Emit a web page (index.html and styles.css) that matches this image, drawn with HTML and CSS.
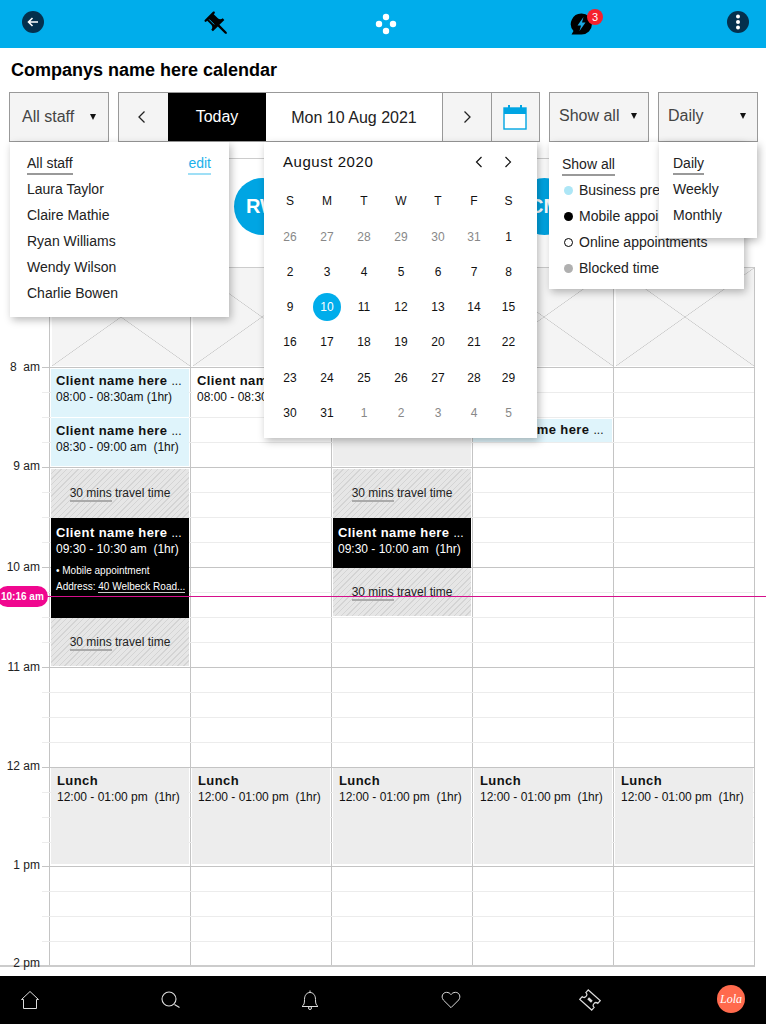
FILE: index.html
```html
<!DOCTYPE html>
<html lang="en">
<head>
<meta charset="utf-8">
<title>Calendar</title>
<link rel="stylesheet" href="styles.css">
</head>
<body>
<div class="app">
  <header class="topbar">
    <button class="round-btn" aria-label="Back"><svg width="14" height="14" viewBox="0 0 14 14"><path d="M12 7H2.500M6.500 3L2.500 7l4 4" fill="none" stroke="#fff" stroke-width="1.600"/></svg></button>
    <svg class="pin" width="30" height="30" viewBox="0 0 26 26"><g transform="rotate(-45 13 13)"><path d="M17 10V5h1c.55 0 1-.45 1-1s-.45-1-1-1H8c-.55 0-1 .45-1 1s.45 1 1 1h1v5c0 1.660-1.340 3-3 3v2h6v9l1 1 1-1v-9h6v-2c-1.660 0-3-1.340-3-3z" fill="#000"/><path d="M11 5.500v6" stroke="#00adeb" stroke-width=".8"/></g></svg>
    <svg class="dots" width="22" height="22" viewBox="0 0 22 22"><circle cx="11" cy="4" r="3.200" fill="#fff"/><circle cx="4" cy="11" r="3.200" fill="#fff"/><circle cx="18" cy="11" r="3.200" fill="#fff"/><circle cx="11" cy="18" r="3.200" fill="#fff"/></svg>
    <div class="bolt">
      <svg width="24" height="24" viewBox="0 0 24 24"><path d="M12.500 1.500a10.500 10.500 0 0 1 0 21H2.500l2-3.500A10.500 10.500 0 0 1 12.500 1.500z" fill="#000"/><path d="M14.500 5l-6 8.500h3.500L10.500 19l6-8.500H13z" fill="#1ba8e0"/></svg>
      <span class="badge">3</span>
    </div>
    <button class="round-btn more" aria-label="More"><svg width="6" height="16" viewBox="0 0 6 16"><circle cx="3" cy="2.500" r="2" fill="#fff"/><circle cx="3" cy="8" r="2" fill="#fff"/><circle cx="3" cy="13.500" r="2" fill="#fff"/></svg></button>
  </header>

  <h1 class="page-title">Companys name here calendar</h1>

  <div class="toolbar">
    <div class="select"><span>All staff</span><i class="caret"></i></div>
    <div class="datebar">
      <div class="nav-cell"><svg width="10" height="14" viewBox="0 0 10 14"><path d="M7.500 1.500L2 7l5.500 5.500" fill="none" stroke="#222" stroke-width="1.300"/></svg></div>
      <div class="today">Today</div>
      <div class="date">Mon 10 Aug 2021</div>
      <div class="nav-cell"><svg width="10" height="14" viewBox="0 0 10 14"><path d="M2.500 1.500L8 7l-5.500 5.500" fill="none" stroke="#222" stroke-width="1.300"/></svg></div>
      <div class="nav-cell nav-last"><svg width="24" height="25" viewBox="0 0 24 25"><rect x="1" y="3" width="22" height="21" fill="#fff" stroke="#00a5e3" stroke-width="1.400"/><rect x="1" y="3" width="22" height="6" fill="#00a5e3"/><path d="M6 0v4M18 0v4" stroke="#00a5e3" stroke-width="2"/></svg></div>
    </div>
    <div class="select select-show"><span>Show all</span><i class="caret"></i></div>
    <div class="select select-view"><span>Daily</span><i class="caret"></i></div>
  </div>

  <div class="staff-row">
    <div class="staff-cell"><span class="avatar">LT</span></div>
    <div class="staff-cell"><span class="avatar">RW</span></div>
    <div class="staff-cell"><span class="avatar">WW</span></div>
    <div class="staff-cell"><span class="avatar">CM</span></div>
    <div class="staff-cell"><span class="avatar">CB</span></div>
  </div>

  <main class="schedule">
    <div class="col c1"></div><div class="col c2"></div><div class="col c3"></div><div class="col c4"></div><div class="col c5"></div>

    <div class="ph-line"></div>
    <div class="ph c1"></div><div class="ph c2"></div><div class="ph c3"></div><div class="ph c4"></div><div class="ph c5"></div>

    <div class="hour h8"></div><div class="hour h9"></div><div class="hour h10"></div><div class="hour h11"></div><div class="hour h12"></div><div class="hour h13"></div>

    <div class="time h8">8&nbsp; am</div>
    <div class="time h9">9 am</div>
    <div class="time h10">10 am</div>
    <div class="time h11">11 am</div>
    <div class="time h12">12 am</div>
    <div class="time h13">1 pm</div>
    <div class="time h14">2 pm</div>

    <div class="event client c1 t800"><b>Client name here <i>...</i></b><span>08:00 - 08:30am (1hr)</span></div>
    <div class="event client second c1 t830"><b>Client name here <i>...</i></b><span>08:30 - 09:00 am&nbsp; (1hr)</span></div>
    <div class="event travel c1 t900"><p><u>30 mins</u> travel time</p></div>
    <div class="event dark c1 t930-long"><b>Client name here <i>...</i></b><span>09:30 - 10:30 am&nbsp; (1hr)</span><small>• Mobile appointment</small><small>Address: <u>40 Welbeck Road...</u></small></div>
    <div class="event travel tail c1 t1030"><p><u>30 mins</u> travel time</p></div>

    <div class="event plain c2 t800"><b>Client name here <i>...</i></b><span>08:00 - 08:30am (1hr)</span></div>

    <div class="event blocked c3 t830"></div>
    <div class="event travel c3 t900"><p><u>30 mins</u> travel time</p></div>
    <div class="event dark c3 t930"><b>Client name here <i>...</i></b><span>09:30 - 10:00 am&nbsp; (1hr)</span></div>
    <div class="event travel tail c3 t1000"><p><u>30 mins</u> travel time</p></div>

    <div class="event client short c4 t830s"><b>Client name here <i>...</i></b></div>

    <div class="event lunch c1 t1200"><b>Lunch</b><span>12:00 - 01:00 pm&nbsp; (1hr)</span></div>
    <div class="event lunch c2 t1200"><b>Lunch</b><span>12:00 - 01:00 pm&nbsp; (1hr)</span></div>
    <div class="event lunch c3 t1200"><b>Lunch</b><span>12:00 - 01:00 pm&nbsp; (1hr)</span></div>
    <div class="event lunch c4 t1200"><b>Lunch</b><span>12:00 - 01:00 pm&nbsp; (1hr)</span></div>
    <div class="event lunch c5 t1200"><b>Lunch</b><span>12:00 - 01:00 pm&nbsp; (1hr)</span></div>
  </main>

  <div class="now"><span class="now-pill">10:16 am</span><span class="now-line"></span></div>

  <div class="menu menu-staff">
    <div class="menu-head"><span class="current">All staff</span><span class="edit">edit</span></div>
    <div class="menu-item">Laura Taylor</div>
    <div class="menu-item">Claire Mathie</div>
    <div class="menu-item">Ryan Williams</div>
    <div class="menu-item">Wendy Wilson</div>
    <div class="menu-item">Charlie Bowen</div>
  </div>

  <div class="menu menu-cal">
    <div class="cal-head">
      <span class="cal-title">August 2020</span>
      <svg width="10" height="14" viewBox="0 0 10 14"><path d="M7.500 2L2.500 7l5 5" fill="none" stroke="#111" stroke-width="1.200"/></svg>
      <svg width="10" height="14" viewBox="0 0 10 14"><path d="M2.500 2l5 5-5 5" fill="none" stroke="#111" stroke-width="1.200"/></svg>
    </div>
    <div class="cal-grid">
      <span class="wd">S</span><span class="wd">M</span><span class="wd">T</span><span class="wd">W</span><span class="wd">T</span><span class="wd">F</span><span class="wd">S</span>
      <span class="off">26</span><span class="off">27</span><span class="off">28</span><span class="off">29</span><span class="off">30</span><span class="off">31</span><span>1</span>
      <span>2</span><span>3</span><span>4</span><span>5</span><span>6</span><span>7</span><span>8</span>
      <span>9</span><span class="sel"><em>10</em></span><span>11</span><span>12</span><span>13</span><span>14</span><span>15</span>
      <span>16</span><span>17</span><span>18</span><span>19</span><span>20</span><span>21</span><span>22</span>
      <span>23</span><span>24</span><span>25</span><span>26</span><span>27</span><span>28</span><span>29</span>
      <span>30</span><span>31</span><span class="off">1</span><span class="off">2</span><span class="off">3</span><span class="off">4</span><span class="off">5</span>
    </div>
  </div>

  <div class="menu menu-show">
    <div class="menu-head"><span class="current">Show all</span></div>
    <div class="menu-item legend"><i class="dot d-blue"></i>Business premises</div>
    <div class="menu-item legend"><i class="dot d-black"></i>Mobile appointments</div>
    <div class="menu-item legend"><i class="dot d-ring"></i>Online appointments</div>
    <div class="menu-item legend"><i class="dot d-grey"></i>Blocked time</div>
  </div>

  <div class="menu menu-view">
    <div class="menu-head"><span class="current">Daily</span></div>
    <div class="menu-item">Weekly</div>
    <div class="menu-item">Monthly</div>
  </div>

  <nav class="bottombar">
    <svg width="20" height="20" viewBox="0 0 20 20"><path d="M10 1.500L1.500 9.500h2V18.500h13V9.500h2z" fill="none" stroke="#ddd" stroke-width="1"/></svg>
    <svg width="20" height="20" viewBox="0 0 20 20"><circle cx="9" cy="9" r="7" fill="none" stroke="#ddd" stroke-width="1.100"/><path d="M14.500 14.500l5 3" stroke="#ddd" stroke-width="1.100"/></svg>
    <svg width="20" height="20" viewBox="0 0 20 20"><path d="M2 16.500c2-1.500 2.500-3 2.500-7C4.500 5 7 2.500 10 2.500S15.500 5 15.500 9.500c0 4 .5 5.500 2.500 7z" fill="none" stroke="#ddd" stroke-width="1"/><path d="M10 .5v2" stroke="#ddd"/><circle cx="10" cy="18" r="1.500" fill="none" stroke="#ddd"/></svg>
    <svg class="heart" width="20" height="18" viewBox="0 0 22 20"><path d="M11 18.500L2.500 10C-.5 6 2 1.500 6 1.500c2.500 0 4 1.200 5 2.500 1-1.300 2.500-2.500 5-2.500 4 0 6.500 4.500 3.500 8.500z" fill="none" stroke="#ddd" stroke-width="1.100"/></svg>
    <svg width="22" height="22" viewBox="0 0 22 22"><g transform="rotate(42 11 11)"><path d="M3 4.700h16v3.600a2.700 2.700 0 0 0 0 5.400v3.600H3v-3.600a2.700 2.700 0 0 0 0-5.400z" fill="none" stroke="#ddd" stroke-width="1.200"/><rect x="8.500" y="9.700" width="5" height="2.600" fill="#ddd"/></g></svg>
    <span class="lola">Lola</span>
  </nav>
</div>
</body>
</html>
```

FILE: styles.css
```css
* { box-sizing: border-box; }
html, body { margin: 0; padding: 0; }
body { font-family: "Liberation Sans", Arial, sans-serif; color: #111; background: #fff; }
.app { position: relative; width: 766px; height: 1024px; overflow: hidden; }

/* top bar */
.topbar { height: 48px; background: #00adeb; display: flex; align-items: center; padding: 0 0 4px 22px; }
.round-btn { width: 22px; height: 22px; border: 0; padding: 0; border-radius: 50%; background: #04304d; display: flex; align-items: center; justify-content: center; flex: none; }
.pin { margin-left: 158px; margin-top: 4px; flex: none; }
.dots { margin-top: 4px; margin-left: 143px; flex: none; }
.bolt { position: relative; width: 24px; height: 24px; margin-top: 4px; margin-left: 172px; flex: none; }
.bolt svg { display: block; }
.badge { position: absolute; left: 18px; top: -3px; width: 16px; height: 16px; border-radius: 50%; background: #f5202c; color: #fff; font-size: 11px; line-height: 16px; text-align: center; }
.more { margin-left: 134px; }

.page-title { margin: 0; height: 44px; padding: 13px 0 0 11px; font-size: 18px; line-height: 18px; font-weight: 700; color: #000; }

/* toolbar */
.toolbar { display: flex; padding-left: 9px; height: 50px; }
.select { position: relative; width: 100px; height: 50px; border: 1px solid #999; background: #f4f4f4; display: flex; align-items: center; justify-content: space-between; padding: 0 12px 0 12px; font-size: 16px; color: #444; }
.caret { width: 0; height: 0; border-left: 3.500px solid transparent; border-right: 3.500px solid transparent; border-top: 6px solid #111; }
.select-show { margin-left: 9px; padding: 0 11px 0 9px; }
.select-show span, .select-view span { margin-bottom: 3px; }
.select-show .caret, .select-view .caret { margin-bottom: 3px; }
.select-view { margin-left: 9px; padding: 0 11px 0 9px; }
.datebar { display: flex; margin-left: 9px; width: 422px; height: 50px; border: 1px solid #999; background: #fff; }
.nav-cell { flex: none; width: 49px; background: #f4f4f4; display: flex; align-items: center; justify-content: center; border-left: 1px solid #999; }
.nav-cell:first-child { border-left: 0; padding-right: 3px; }
.nav-last { width: 48px; padding-right: 2px; }
.today { flex: none; width: 98px; background: #000; color: #fff; font-size: 16px; display: flex; align-items: center; justify-content: center; }
.date { flex: none; width: 176px; font-size: 16px; color: #222; display: flex; align-items: center; justify-content: center; padding-top: 2px; }

/* staff row */
.staff-row { margin: 16px 0 0 49px; width: 705px; height: 109px; border-top: 1px solid #ccc; display: grid; grid-template-columns: repeat(5, 141px); }
.staff-cell { display: flex; justify-content: center; padding: 19px 0 0 4px; }
.avatar { width: 57px; height: 57px; border-radius: 50%; background: #00a5e3; color: #fff; font-size: 20px; font-weight: 700; display: flex; align-items: center; justify-content: center; }

/* schedule */
.schedule { width: 755px; height: 700px; display: grid; grid-template-columns: 49px repeat(5, 141px); grid-template-rows: 100px repeat(16, 25px) repeat(8, 24.750px); border-right: 1px solid #c4c4c4; border-bottom: 2px solid #ccc; }
.col { grid-row: 1 / -1; border-left: 1px solid #c4c4c4; }
.c1 { grid-column: 2; } .c2 { grid-column: 3; } .c3 { grid-column: 4; } .c4 { grid-column: 5; } .c5 { grid-column: 6; }
.ph-line { grid-row: 1; grid-column: 2 / -1; border-top: 1px solid #ccc; }
.ph { grid-row: 1; margin: 1px 0 1px 3px; background-color: #f4f4f4;
  background-image:
    linear-gradient(to top right, transparent calc(50% - .6px), #c8c8c8 50%, transparent calc(50% + .6px)),
    linear-gradient(to bottom right, transparent calc(50% - .6px), #c8c8c8 50%, transparent calc(50% + .6px)); }

.hour { grid-column: 1 / -1; margin-left: 42px; border-top: 1px solid #c4c4c4; background-image: repeating-linear-gradient(to bottom, transparent 0, transparent 24px, #ececec 24px, #ececec 25px); }
.hour.h8 { grid-row: 2 / span 4; } .hour.h9 { grid-row: 6 / span 4; } .hour.h10 { grid-row: 10 / span 4; }
.hour.h11 { grid-row: 14 / span 4; } .hour.h12 { grid-row: 18 / span 4; } .hour.h13 { grid-row: 22 / span 4; }

.time { grid-column: 1; justify-self: end; align-self: start; padding-right: 9px; font-size: 12px; line-height: 14px; color: #222; transform: translateY(-7px); white-space: nowrap; }
.time.h8 { grid-row: 2; } .time.h9 { grid-row: 6; transform: translateY(-8px); } .time.h10 { grid-row: 10; } .time.h11 { grid-row: 14; } .time.h12 { grid-row: 18; transform: translateY(-8px); } .time.h13 { grid-row: 22; transform: translateY(-8px); } .time.h14 { grid-row: 25; align-self: end; transform: translateY(5px); }

.event { margin: 0 1px 0 2px; padding: 4px 0 0 5px; font-size: 12px; line-height: 16px; overflow: hidden; z-index: 1; white-space: nowrap; }
.event b { display: block; font-size: 13px; letter-spacing: .42px; }
.event b i { font-style: normal; font-weight: 400; letter-spacing: 0; font-size: 12px; }
.event span { display: block; }
.event small { display: block; font-size: 10px; }
.event.dark small { line-height: 16px; margin-top: 6px; }
.event.dark small + small { margin-top: 0; }
.event u { text-decoration: none; border-bottom: 1.500px solid currentColor; }

.t800 { grid-row: 2 / span 2; margin-top: 2px; }
.t830 { grid-row: 4 / span 2; }
.t830s { grid-row: 4 / span 1; }
.t900 { grid-row: 6 / span 2; }
.t930 { grid-row: 8 / span 2; }
.t930-long { grid-row: 8 / span 4; }
.t1000 { grid-row: 10 / span 2; }
.t1030 { grid-row: 12 / span 2; }
.t1200 { grid-row: 18 / span 4; }

.client { background: #dff4fb; }
.second { margin-bottom: 1px; padding-top: 5px; border-top: 1px solid #fff; }
.plain { background: #fff; }
.blocked { background: #ededed; margin-bottom: 1px; }
.short { margin-top: 2px; margin-bottom: 0; padding-top: 3px; background: #dff4fb; margin-left: 1px; }
.travel { margin: 2px 1px -1px 2px; padding: 0 0 2px; background-color: #e4e4e4; background-image: repeating-linear-gradient(135deg, #e6e6e6 0, #e6e6e6 3px, #d4d4d4 3px, #d4d4d4 4px); display: flex; align-items: center; justify-content: center; color: #222; }
.travel p { margin: 0; }
.travel u { border-bottom: 2px solid #aaa; }
.travel.tail { margin: 1px 1px 1px 2px; padding: 0; }
.dark { background: #000; color: #fff; margin-top: 1px; margin-bottom: -1px; padding-top: 7px; }
.dark u { border-bottom-color: #ccc; }
.lunch { background: #ededed; margin-top: 1px; margin-bottom: 2px; padding: 5px 0 0 6px; }

/* current time */
.now { position: absolute; left: -3px; top: 586px; width: 769px; height: 21px; display: flex; align-items: center; z-index: 3; }
.now-pill { flex: none; width: 51px; height: 21px; border-radius: 11px; background: #f0078f; color: #fff; font-size: 10px; font-weight: 700; line-height: 21px; padding-left: 4px; white-space: nowrap; }
.now-line { flex: 1; height: 1px; background: #d60f8c; }

/* popovers */
.menu { position: absolute; z-index: 5; top: 142px; background: #fff; box-shadow: 2px 3px 8px rgba(0,0,0,.28); font-size: 14px; line-height: 26px; color: #222; }
.menu-staff { left: 10px; width: 219px; height: 175px; padding: 8px 18px 0 17px; }
.menu-show { left: 549px; width: 195px; height: 147px; padding: 9px 10px 0 13px; }
.menu-view { left: 659px; width: 98px; height: 96px; padding: 8px 10px 0 14px; }
.menu-head { display: flex; justify-content: space-between; height: 26px; }
.current { height: 22px; line-height: 21px; margin-top: 3px; border-bottom: 2px solid #999; }
.edit { height: 22px; line-height: 21px; margin-top: 3px; color: #1bb0ea; border-bottom: 2px solid #9fdff6; }
.legend { display: flex; align-items: center; white-space: nowrap; }
.dot { width: 9px; height: 9px; border-radius: 50%; margin: 0 6px 0 2px; flex: none; }
.d-blue { background: #ade6f6; }
.d-black { background: #000; }
.d-ring { background: #fff; border: 1.500px solid #000; }
.d-grey { background: #b0b0b0; }

.menu-cal { left: 264px; width: 273px; height: 296px; padding: 0 0 0 7.500px; }
.cal-head { display: flex; align-items: center; height: 41px; padding: 0 0 2px 11.500px; }
.cal-title { flex: 1; font-size: 15px; letter-spacing: .55px; color: #111; }
.cal-head svg + svg { margin: 0 24px 0 19px; }
.cal-grid { display: grid; grid-template-columns: repeat(5, 37px) 35px 34px; grid-auto-rows: 35.200px; font-size: 12px; color: #111; }
.cal-grid span { display: flex; align-items: center; justify-content: center; }
.cal-grid .off { color: #888; }
.cal-grid span:not(.wd) { position: relative; top: 1px; }
.sel em { width: 28px; height: 28px; border-radius: 50%; background: #00adeb; color: #fff; font-style: normal; display: flex; align-items: center; justify-content: center; }

/* bottom bar */
.bottombar { position: absolute; left: -40px; width: 840px; bottom: 0; height: 48px; background: #000; display: grid; grid-template-columns: repeat(6, 140px); justify-items: center; align-items: center; }
.heart { margin-left: 1px; }
.lola { width: 28px; height: 28px; border-radius: 50%; background: #ff6a4d; color: #fff; font-family: "Liberation Serif", serif; font-style: italic; font-size: 12px; display: flex; align-items: center; justify-content: center; margin-left: 2px; margin-bottom: 2px; }
```
